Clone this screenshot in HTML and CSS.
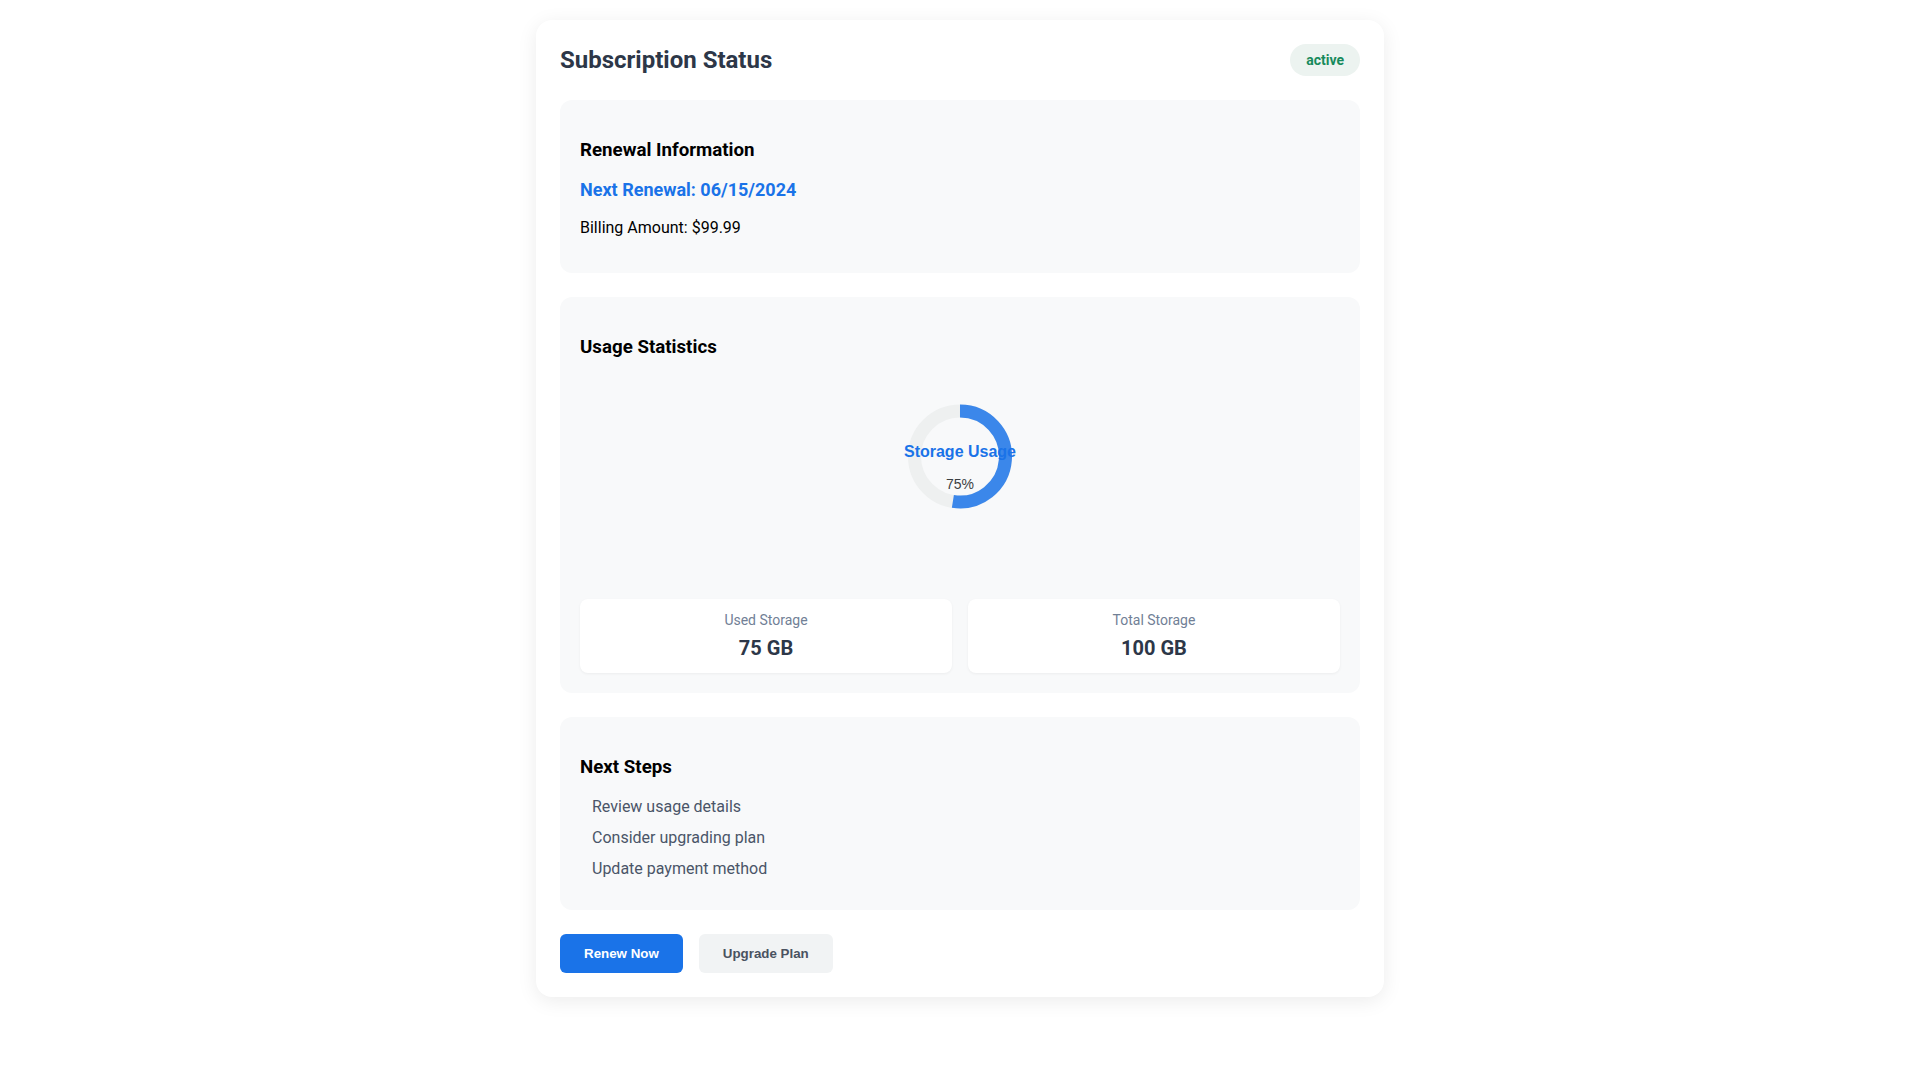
FILE: index.html
```html
<!DOCTYPE html>
<html lang="en">
<head>
<meta charset="utf-8">
<title>Subscription Status</title>
<link rel="stylesheet" href="styles.css">
</head>
<body>
<div class="card">
  <div class="header">
    <h2 class="title">Subscription Status</h2>
    <span class="badge">active</span>
  </div>

  <section class="panel">
    <h3>Renewal Information</h3>
    <p class="renewal">Next Renewal: 06/15/2024</p>
    <p class="billing">Billing Amount: $99.99</p>
  </section>

  <section class="panel">
    <h3>Usage Statistics</h3>
    <div class="chart">
      <svg class="donut" width="200" height="198" viewBox="0 0 200 198">
        <circle cx="100" cy="79.5" r="45.5" fill="none" stroke="#eef0f0" stroke-width="13"/>
        <path d="M100 34 A45.5 45.5 0 1 1 92.88 124.44" fill="none" stroke="#3b87ea" stroke-width="13"/>
        <text x="100" y="80" text-anchor="middle" class="donut-label">Storage Usage</text>
        <text x="100" y="112" text-anchor="middle" class="donut-value">75%</text>
      </svg>
    </div>
    <div class="stats">
      <div class="stat">
        <div class="stat-label">Used Storage</div>
        <div class="stat-value">75 GB</div>
      </div>
      <div class="stat">
        <div class="stat-label">Total Storage</div>
        <div class="stat-value">100 GB</div>
      </div>
    </div>
  </section>

  <section class="panel">
    <h3>Next Steps</h3>
    <ul class="steps">
      <li>Review usage details</li>
      <li>Consider upgrading plan</li>
      <li>Update payment method</li>
    </ul>
  </section>

  <div class="actions">
    <button class="btn btn-primary">Renew Now</button>
    <button class="btn btn-secondary">Upgrade Plan</button>
  </div>
</div>
</body>
</html>
```

FILE: styles.css
```css
html, body {
  margin: 0;
  background: #ffffff;
}

body {
  padding: 20px 0;
  font-family: Roboto, "Liberation Sans", Arial, sans-serif;
  color: #000;
}

.card {
  width: 800px;
  margin: 0 auto;
  padding: 24px;
  background: #fff;
  border-radius: 16px;
  box-shadow: 0 4px 20px rgba(0, 0, 0, 0.08);
}

.header {
  display: flex;
  justify-content: space-between;
  align-items: center;
  height: 32px;
  margin-bottom: 24px;
}

.title {
  margin: 0;
  font-size: 24px;
  font-weight: 700;
  color: #2d3748;
}

.badge {
  display: inline-block;
  padding: 6px 16px;
  line-height: 20px;
  border-radius: 16px;
  background: #ecf3f0;
  color: #168a5c;
  font-size: 14px;
  font-weight: 700;
}

.panel {
  background: #f8f9fa;
  border-radius: 12px;
  padding: 20px;
  margin-bottom: 24px;
}

.panel h3 {
  margin: 18.72px 0;
  font-size: 18.72px;
  font-weight: 700;
  color: #000;
}

.renewal {
  margin: 18px 0;
  font-size: 18px;
  font-weight: 700;
  color: #1a73e8;
}

.billing {
  margin: 16px 0;
  font-size: 16px;
  color: #000;
}

.chart {
  height: 198px;
  display: flex;
  justify-content: center;
}

.donut-label {
  font-family: "Liberation Sans", Arial, sans-serif;
  font-size: 16px;
  font-weight: 700;
  fill: #1a73e8;
}

.donut-value {
  font-family: "Liberation Sans", Arial, sans-serif;
  font-size: 14px;
  fill: #3c4043;
}

.stats {
  display: grid;
  grid-template-columns: 1fr 1fr;
  gap: 16px;
  margin-top: 24px;
}

.stat {
  background: #fff;
  border-radius: 8px;
  padding: 13px 12px 13px;
  text-align: center;
  box-shadow: 0 1px 3px rgba(0, 0, 0, 0.05);
}

.stat-label {
  font-size: 14px;
  color: #718096;
  margin-bottom: 8px;
}

.stat-value {
  font-size: 20px;
  font-weight: 700;
  color: #2d3748;
}

.steps {
  list-style: none;
  margin: 19px 0 0;
  padding: 0;
}

.steps li {
  padding-left: 12px;
  margin-bottom: 12px;
  font-size: 16px;
  color: #4a5568;
}

.actions {
  display: flex;
  gap: 16px;
  margin-top: 24px;
}

.btn {
  border: none;
  border-radius: 6px;
  padding: 12px 24px;
  font-family: "Liberation Sans", Arial, sans-serif;
  font-size: 13.333px;
  font-weight: 700;
  cursor: pointer;
}

.btn-primary {
  background: #1a73e8;
  color: #fff;
}

.btn-secondary {
  background: #f1f3f4;
  color: #4a5260;
}
```
